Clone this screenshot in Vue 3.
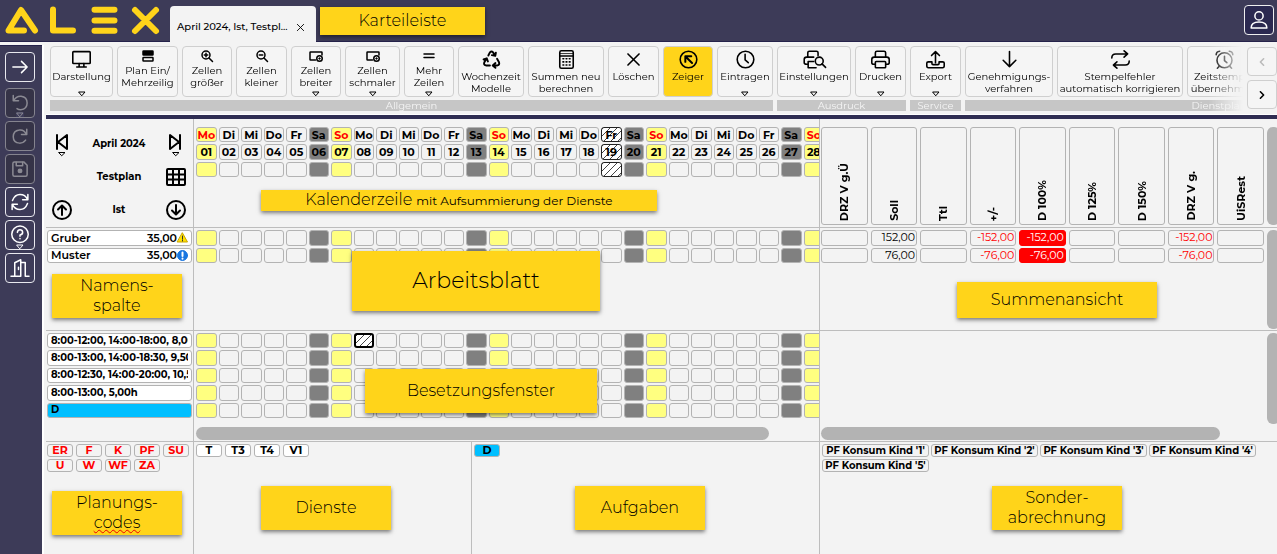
<script setup>
const groups = [
  {
    title: 'Allgemein',
    cls: '',
    items: [
      { icon: 'monitor', lines: ['Darstellung'], w: 63, menu: true },
      { icon: 'rows', lines: ['Plan Ein/', 'Mehrzeilig'], w: 61, small: true },
      { icon: 'zoomin', lines: ['Zellen', 'größer'], w: 50, small: true },
      { icon: 'zoomout', lines: ['Zellen', 'kleiner'], w: 51, small: true },
      { icon: 'cell', lines: ['Zellen', 'breiter'], w: 50, small: true, menu: true },
      { icon: 'cell', lines: ['Zellen', 'schmaler'], w: 55, small: true, menu: true },
      { icon: 'lines', lines: ['Mehr', 'Zeilen'], w: 50, small: true, menu: true },
      { icon: 'recycle', lines: ['Wochenzeit', 'Modelle'], w: 66 },
      { icon: 'calc', lines: ['Summen neu', 'berechnen'], w: 76 },
      { icon: 'cross', lines: ['Löschen'], w: 51 },
      { icon: 'pointer', lines: ['Zeiger'], w: 50, active: true },
      { icon: 'clock', lines: ['Eintragen'], w: 56, menu: true },
    ],
  },
  {
    title: 'Ausdruck',
    cls: '',
    items: [
      { icon: 'printsearch', lines: ['Einstellungen'], w: 74, menu: true },
      { icon: 'print', lines: ['Drucken'], w: 51, menu: true },
    ],
  },
  { title: 'Service', cls: '', items: [{ icon: 'export', lines: ['Export'], w: 51, menu: true }] },
  {
    title: 'Dienstplan',
    cls: 'wide',
    items: [
      { icon: 'down', lines: ['Genehmigungs-', 'verfahren'], w: 88 },
      { icon: 'repeat', lines: ['Stempelfehler', 'automatisch korrigieren'], w: 126 },
      { icon: 'alarm', lines: ['Zeitstempel', 'übernehmen'], w: 74 },
    ],
  },
]

const icons = {
  monitor: '<rect x="1" y="2" width="22" height="15" rx="1"/><path d="M9 17v4M15 17v4M6 21.500h12"/>',
  rows: '<rect x="2" y="2" width="20" height="8" rx="1" fill="currentColor"/><rect x="2" y="15" width="20" height="7" rx="1"/>',
  zoomin: '<circle cx="10" cy="10" r="8"/><path d="M16 16L23 23M10 6.500v7M6.500 10h7"/>',
  zoomout: '<circle cx="10" cy="10" r="8"/><path d="M16 16L23 23M6.500 10h7"/>',
  cell: '<path d="M11 20H1a1 1 0 0 1-1-1V5a1 1 0 0 1 1-1h22a1 1 0 0 1 1 1v5"/><circle cx="19" cy="17" r="5.500"/><path d="M19 16v2M18 17h2"/>',
  lines: '<path d="M2 8h20M2 15h20"/>',
  recycle: '<path d="M8 7l2-4q2-2 4 0l2.500 4M17.500 3.500L16.800 7.500 12.500 6.500M19 11l2.500 4.500q1 3-2 4H14M17 16.500L13.500 19.500 17 22.500M10 19.500H5q-3.500-1-2-4l2.500-4.500M2 12l4-1.500 1.500 4" stroke-width="2.400"/>',
  calc: '<rect x="3.500" y="1" width="17" height="22" rx="2"/><path d="M4 7.500h16"/><path d="M4 4.500h16" stroke-width="1"/><path d="M7.500 11h1M11.500 11h1M15.500 11h1M7.500 15h1M11.500 15h1M15.500 15h1M7.500 19h1M11.500 19h1M15.500 19h1"/>',
  cross: '<path d="M5 5l14 14M19 5L5 19"/>',
  pointer: '<circle cx="12" cy="12" r="10.500"/><path d="M8 15V8H15.500M8.500 8.500l8 8" stroke-width="2.500"/>',
  clock: '<circle cx="12" cy="12" r="10.500"/><path d="M11.500 5.500v7l4 3.500"/>',
  print: '<path d="M5.500 9V3.500q0-2 2-2h9q2 0 2 2V9M5 18H3.500Q1 18 1 16v-4q0-3 3-3h16q3 0 3 3v4q0 2-2.500 2H19"/><rect x="5.500" y="14.500" width="13" height="8" rx="1"/>',
  printsearch: '<path d="M3.500 9V3.500q0-2 2-2h9q2 0 2 2V7M4 18H2.500Q-1 18-1 16v-4q0-3 3-3h9M11 14.500H4v8h10"/><circle cx="18" cy="14" r="5"/><path d="M21.500 17.500L26 22"/>',
  export: '<path d="M12 16V2M7 7l5-5 5 5M7.500 15H3q-2 0-2 1.500V20q0 2.500 2 2.500h18q2 0 2-2.500v-3.500Q23 15 21 15h-4.500v2q0 1.500-1.500 1.500H9q-1.500 0-1.500-1.500z"/>',
  down: '<path d="M12 2v19M4 13l8 8 8-8"/>',
  repeat: '<path d="M1 10q0-5 5-5h15M16.500 1l4.500 4-4.500 4M23 14q0 5-5 5H3M7.500 15L3 19l4.500 4"/>',
  alarm: '<circle cx="12" cy="13" r="9.500"/><path d="M12 8v5.500l3 2.500M5 21L3 23M19 21l2 2M1.500 6q0-4 4.500-4.500M18 1.500q4.500.5 4.500 4.500"/>',
  right: '<path d="M2.500 12h19M14 4.500l7.500 7.500-7.500 7.500"/>',
  undo: '<path d="M3 2v7h7M3.500 9q3.500-6.500 10-6 8 1 8 9t-8.500 9q-3 0-5-1.500"/>',
  redo: '<path d="M21 3v7h-7M20.500 10Q17.500 3 11 4q-8 1-8 9t8.500 8.500q5 0 8-4"/>',
  save: '<path d="M2.500 4.500q0-2 2-2H17l4.500 4.500v12.500q0 2-2 2h-15q-2 0-2-2z"/><path d="M7 3v4.500h8.500V3"/><circle cx="12" cy="14.500" r="2.300" fill="currentColor"/>',
  sync: '<path d="M22.500 2v7h-7M1.500 22v-7h7M2 10Q5 2 12 2q7 0 10 6.500M22 14q-3 8-10 8-7 0-10-6.500"/>',
  help: '<circle cx="12" cy="11" r="11"/><path d="M8.500 8.500Q9 5 12 5t3.500 3-3.500 4v1.500M12 16.500v.5"/>',
  door: '<path d="M0 23h5V5l8-4v22h-3M5 23h4M13 4.500h6V23h5M10 11v3"/>',
  user: '<circle cx="12" cy="6.500" r="5.500"/><path d="M1.500 22.500q0-8 10.500-8t10.500 8z"/>',
}

const tools = [
  { icon: 'right', label: 'Weiter' },
  { icon: 'undo', label: 'Rückgängig', off: true, menu: true },
  { icon: 'redo', label: 'Wiederholen', off: true },
  { icon: 'save', label: 'Speichern', off: true },
  { icon: 'sync', label: 'Aktualisieren' },
  { icon: 'help', label: 'Hilfe', menu: true },
  { icon: 'door', label: 'Beenden' },
]

const names = ['Mo', 'Di', 'Mi', 'Do', 'Fr', 'Sa', 'So']
const days = Array.from({ length: 28 }, (_, i) => {
  const name = names[i % 7]
  return {
    n: i + 1,
    name,
    num: String(i + 1).padStart(2, '0'),
    kind: name === 'Sa' ? 'sat' : name === 'So' || i === 0 ? 'sun' : '',
  }
})

const sumHeads = ['DRZ V g.Ü', 'Soll', 'Ttl', '+/-', 'D 100%', 'D 125%', 'D 150%', 'DRZ V g.', 'UiSRest']
const sumRows = [
  ['', '152,00', '', '-152,00', '-152,00', '', '', '-152,00', ''],
  ['', '76,00', '', '-76,00', '-76,00', '', '', '-76,00', ''],
]
const shifts = [
  '8:00-12:00, 14:00-18:00, 8,00h',
  '8:00-13:00, 14:00-18:30, 9,50h',
  '8:00-12:30, 14:00-20:00, 10,50h',
  '8:00-13:00, 5,00h',
  'D',
]
const codes = ['ER', 'F', 'K', 'PF', 'SU', 'U', 'W', 'WF', 'ZA']
const duties = ['T', 'T3', 'T4', 'V1']
</script>

<template>
  <div class="app">
    <header class="top">
      <svg class="logo" viewBox="0 0 160 42" role="img" aria-label="ALEX">
        <path d="M24 30.500H8.500L21 10 35 30.500M53 9.500v21h20M94.500 9.800h20M94.500 20.500h20M94.500 30.800h20M135 10l21 21M156 10l-21 21" />
      </svg>
      <div class="tab">
        <span>April 2024, Ist, Testpl...</span>
        <button class="tabclose" aria-label="Schließen">
          <svg viewBox="0 0 10 10"><path d="M1.500 1.500l7 7M8.500 1.500l-7 7" /></svg>
        </button>
      </div>
      <div class="note n-tabs">Karteileiste</div>
      <button class="user" aria-label="Benutzer">
        <svg class="ico" viewBox="0 0 24 24" v-html="icons.user"></svg>
      </button>
    </header>

    <div class="body">
      <nav class="side">
        <button v-for="t in tools" :key="t.icon" class="tool" :class="{ off: t.off }" :aria-label="t.label">
          <svg class="ico" viewBox="0 0 24 24" v-html="icons[t.icon]"></svg>
          <svg v-if="t.menu" class="tri badge" viewBox="0 0 8 5"><path d="M1 1h6L4 4.500z" /></svg>
        </button>
      </nav>

      <main class="main">
        <div class="ribbon">
          <div class="scroller">
            <section v-for="g in groups" :key="g.title" class="group" :class="g.cls">
              <div class="buttons">
                <button
                  v-for="(b, i) in g.items"
                  :key="i"
                  class="rb"
                  :class="{ small: b.small, active: b.active }"
                  :style="{ width: b.w + 'px' }"
                >
                  <span class="ibox"><svg class="ico" viewBox="0 0 24 24" v-html="icons[b.icon]"></svg></span>
                  <span v-for="l in b.lines" :key="l" class="line">{{ l }}</span>
                  <svg v-if="b.menu" class="tri" viewBox="0 0 8 5"><path d="M1 1h6L4 4.500z" /></svg>
                </button>
              </div>
              <div class="gtitle">{{ g.title }}</div>
            </section>
          </div>
          <div class="pager">
            <button class="pg dim" aria-label="Zurück"><svg viewBox="0 0 10 10"><path d="M7 1L3 5l4 4" /></svg></button>
            <button class="pg" aria-label="Vor"><svg viewBox="0 0 10 10"><path d="M3 1l4 4-4 4" /></svg></button>
          </div>
        </div>

        <div class="board">
          <section class="pane head picker">
            <div class="prow">
              <button class="plain" aria-label="Voriger Monat">
                <svg viewBox="0 0 20 26"><path d="M5 4v14M15 4v14L6 11z" /><path class="thin" d="M7 21.500h6l-3 3z" /></svg>
              </button>
              <b>April 2024</b>
              <button class="plain" aria-label="Nächster Monat">
                <svg viewBox="0 0 20 26"><path d="M14 4v14M4 4v14L13 11z" /><path class="thin" d="M7 21.500h6l-3 3z" /></svg>
              </button>
            </div>
            <div class="prow">
              <span></span>
              <b>Testplan</b>
              <button class="plain" aria-label="Tabelle">
                <svg viewBox="0 0 20 26"><rect x="1" y="5" width="18" height="16" rx="1" /><path d="M1 10.500h18M1 15.500h18M7 5v16M13 5v16" /></svg>
              </button>
            </div>
            <div class="prow">
              <button class="plain" aria-label="Nach oben">
                <svg viewBox="0 0 20 26"><circle cx="10" cy="13" r="9" /><path d="M10 18V9M6 12.500l4-4 4 4" /></svg>
              </button>
              <b>Ist</b>
              <button class="plain" aria-label="Nach unten">
                <svg viewBox="0 0 20 26"><circle cx="10" cy="13" r="9" /><path d="M10 8v9M6 13.500l4 4 4-4" /></svg>
              </button>
            </div>
          </section>

          <section class="pane head calpane">
            <table class="cal r3">
              <thead>
                <tr>
                  <th v-for="d in days" :key="d.n" :class="[d.kind, { hatch: d.n === 19, red: d.kind === 'sun' }]">{{ d.name }}</th>
                </tr>
                <tr>
                  <th v-for="d in days" :key="d.n" :class="[d.kind, { hatch: d.n === 19 }]">{{ d.num }}</th>
                </tr>
                <tr>
                  <td v-for="d in days" :key="d.n" :class="[d.kind, { hatch: d.n === 19 }]"></td>
                </tr>
              </thead>
            </table>
            <div class="note n-cal"><span>Kalenderzeile <small>mit Aufsummierung der Dienste</small></span></div>
          </section>

          <section class="pane head sumpane">
            <table class="sum">
              <thead>
                <tr><th v-for="h in sumHeads" :key="h"><span>{{ h }}</span></th></tr>
              </thead>
            </table>
            <div class="vbar"></div>
          </section>

          <section class="pane mid">
            <ul class="list r2">
              <li>
                <span>Gruber</span><span class="hrs">35,00</span>
                <svg class="mark" viewBox="0 0 11 11"><path d="M5.500 1L10.500 10H.5z" fill="#ffe000" stroke="#c9a400" /><path d="M5.500 4v3M5.500 8v1" stroke="#333" /></svg>
              </li>
              <li>
                <span>Muster</span><span class="hrs">35,00</span>
                <svg class="mark" viewBox="0 0 11 11"><circle cx="5.500" cy="5.500" r="5" fill="#1976e0" stroke="#1976e0" /><path d="M5.500 2.500v3.500M5.500 8.500v.2" stroke="#fff" stroke-width="2" /></svg>
              </li>
            </ul>
            <div class="note n-names">Namens-<br />spalte</div>
          </section>

          <section class="pane mid calpane">
            <table class="cal r2">
              <tbody>
                <tr v-for="r in 2" :key="r"><td v-for="d in days" :key="d.n" :class="d.kind"></td></tr>
              </tbody>
            </table>
            <div class="note n-sheet">Arbeitsblatt</div>
          </section>

          <section class="pane mid sumpane">
            <table class="sum r2">
              <tbody>
                <tr v-for="(r, i) in sumRows" :key="i">
                  <td v-for="(v, j) in r" :key="j" :class="{ red: v[0] === '-', full: j === 4 }">{{ v }}</td>
                </tr>
              </tbody>
            </table>
            <div class="vbar"></div>
            <div class="note n-sum">Summenansicht</div>
          </section>

          <section class="pane staff">
            <ul class="list r5">
              <li v-for="s in shifts" :key="s" :class="{ blue: s === 'D' }"><span class="clip">{{ s }}</span></li>
            </ul>
          </section>

          <section class="pane staff calpane">
            <table class="cal r5">
              <tbody>
                <tr v-for="r in 5" :key="r">
                  <td v-for="d in days" :key="d.n" :class="[d.kind, { hatch: r === 1 && d.n === 8, picked: r === 1 && d.n === 8 }]"></td>
                </tr>
              </tbody>
            </table>
            <div class="hbar"></div>
            <div class="note n-staff">Besetzungsfenster</div>
          </section>

          <section class="pane staff sumpane">
            <div class="spacer"></div>
            <div class="vbar"></div>
            <div class="hbar"></div>
          </section>

          <section class="pane foot">
            <div class="chips">
              <button v-for="c in codes" :key="c" class="chip red">{{ c }}</button>
            </div>
            <div class="note n-codes">Planungs-<br /><span class="wavy">codes</span></div>
          </section>

          <div class="split">
            <section class="pane foot">
              <div class="chips">
                <button v-for="c in duties" :key="c" class="chip white">{{ c }}</button>
              </div>
              <div class="note n-duty">Dienste</div>
            </section>
            <section class="pane foot">
              <div class="chips"><button class="chip blue">D</button></div>
              <div class="note n-task">Aufgaben</div>
            </section>
          </div>

          <section class="pane foot sumpane">
            <div class="chips">
              <button v-for="n in 5" :key="n" class="chip long">PF Konsum Kind '{{ n }}'</button>
            </div>
            <div class="note n-extra">Sonder-<br />abrechnung</div>
          </section>
        </div>
      </main>
    </div>
  </div>
</template>

<style>
body {
  background: #f3f3f3;
  overflow: hidden;
}
</style>

<style scoped>
.app {
  min-height: 100vh;
  display: flex;
  flex-direction: column;
  background: #f3f3f3;
  color: #000;
  font: 11px/12px Montserrat, Inter, "Open Sans", sans-serif;
}
.app *,
.app {
  box-sizing: border-box;
}
button {
  font: inherit;
  color: inherit;
  padding: 0;
  margin: 0;
  cursor: pointer;
}
svg {
  display: block;
  fill: none;
  stroke: currentColor;
  stroke-width: 2;
  stroke-linecap: round;
  stroke-linejoin: round;
  overflow: visible;
}
.top {
  height: 42px;
  display: flex;
  align-items: flex-end;
  background: #3d3b58;
  border-bottom: 1px solid #25224a;
}
.logo {
  width: 160px;
  height: 42px;
  color: #ffd41a;
  stroke-width: 6;
  flex: none;
  margin-bottom: -1px;
}
.tab {
  width: 146px;
  height: 36px;
  margin: 0 4px -1px 10px;
  padding: 6px 11px 0 7px;
  display: flex;
  align-items: center;
  justify-content: space-between;
  background: #f3f3f3;
  border-radius: 4px 4px 0 0;
  font-size: 10px;
  font-weight: 500;
  white-space: nowrap;
}
.tabclose {
  border: 0;
  background: none;
}
.tabclose svg {
  width: 9px;
  height: 9px;
  stroke-width: 1;
}
.user {
  width: 30px;
  height: 30px;
  margin: 0 3px 6px auto;
  display: grid;
  place-items: center;
  background: #2b2950;
  border: 1px solid #eee;
  border-radius: 4px;
  color: #fff;
}
.user .ico {
  width: 18px;
  height: 18px;
}
.body {
  flex: 1;
  display: flex;
  padding-top: 3px;
}
.side {
  width: 42px;
  flex: none;
  margin-right: 4px;
  padding: 6px 0 0 5px;
  display: flex;
  flex-direction: column;
  gap: 3px;
  background: #3d3b58;
  border-top: 1px solid #25224a;
  box-shadow: 2px 0 0 #fff;
}
.tool {
  width: 30px;
  height: 30px;
  display: grid;
  place-items: center;
  position: relative;
  background: #3d3b58;
  border: 1px solid #e8e8ee;
  border-radius: 4px;
  color: #fff;
}
.tool:first-child {
  margin-bottom: 3px;
}
.tool .ico {
  width: 18px;
  height: 18px;
}
.tool.off {
  background: #353347;
  border-color: #85848f;
  color: #8b8a93;
}
.badge {
  position: absolute;
  bottom: 0;
  left: 10px;
}
.tool .badge {
  background: #3d3b58;
}
.main {
  flex: 1;
  min-width: 0;
  display: flex;
  flex-direction: column;
}
.ribbon {
  height: 70px;
  display: flex;
  padding: 1px 0 0 4px;
  border-bottom: 1px solid #fff;
}
.scroller {
  flex: 1;
  min-width: 0;
  display: flex;
  gap: 4px;
  overflow: hidden;
  mask-image: linear-gradient(to right, #000 calc(100% - 34px), transparent);
}
.group {
  flex: none;
}
.group.wide {
  width: 508px;
}
.buttons {
  display: flex;
  gap: 4px;
}
.rb {
  flex: none;
  height: 51px;
  display: flex;
  flex-direction: column;
  align-items: center;
  justify-content: flex-start;
  background: #f5f5f5;
  border: 1px solid #cfcfcf;
  border-radius: 4px;
  white-space: nowrap;
  font-size: 10px;
}
.rb.active {
  background: #ffd41a;
}
.ibox {
  height: 24px;
  flex: none;
  display: grid;
  place-items: center;
}
.ibox .ico {
  width: 19px;
  height: 19px;
}
.small .ibox {
  height: 18px;
}
.small .ibox .ico {
  width: 12px;
  height: 12px;
}
.small .ico {
  stroke-width: 3;
}
.tri {
  width: 8px;
  height: 5px;
  stroke-width: 1;
}
.rb .tri {
  margin-top: auto;
}
.gtitle {
  height: 11px;
  margin-top: 3px;
  background: #c6c6c6;
  color: #f5f5f5;
  font-size: 10px;
  line-height: 12px;
  text-align: center;
}
.pager {
  display: flex;
  flex-direction: column;
  gap: 4px;
  padding: 1px 0 0 4px;
}
.pg {
  width: 30px;
  height: 29px;
  display: grid;
  place-items: center;
  background: #f5f5f5;
  border: 1px solid #cfcfcf;
  border-radius: 4px;
}
.pg svg {
  width: 8px;
  height: 8px;
}
.pg.dim {
  color: #bbb;
}
.board {
  flex: 1;
  display: grid;
  grid-template-columns: 148px minmax(0, 626fr) minmax(0, 457fr);
  grid-template-rows: minmax(109px, auto) minmax(103px, auto) minmax(111px, auto) minmax(112px, 1fr);
  border-top: 4px solid #2f2d52;
}
.pane {
  position: relative;
  min-width: 0;
  overflow: hidden;
  border-right: 1px solid #bdbdbd;
  border-bottom: 1px solid #bdbdbd;
}
.sumpane {
  border-right: 0;
}
.foot {
  border-bottom: 0;
}
.head {
  padding-top: 8px;
}
.mid,
.staff {
  padding-top: 2px;
}
.picker {
  padding: 8px 7px 0 6px;
}
.prow {
  height: 33px;
  display: grid;
  grid-template-columns: 20px 1fr 20px;
  align-items: center;
  text-align: center;
  font-size: 10px;
}
.plain {
  border: 0;
  background: none;
}
.plain svg {
  width: 20px;
  height: 26px;
}
.plain .thin {
  stroke-width: 1;
}
.calpane {
  padding-left: 2px;
}
.cal,
.sum,
.sum thead {
  display: block;
}
.cal {
  margin-right: -5px;
}
.cal thead,
.cal tbody,
.sum.r2 tbody {
  display: grid;
  grid-auto-rows: 1fr;
  gap: 2px;
}
.r3 thead {
  height: 50px;
}
.r2 tbody,
.list.r2 {
  height: 33px;
}
.r5 tbody,
.list.r5 {
  height: 85px;
}
.list.r5 {
  font-size: 10px;
  font-weight: 700;
}
.cal tr {
  display: grid;
  grid-template-columns: repeat(28, minmax(0, 1fr));
  gap: 2px;
}
.cal th,
.cal td {
  padding: 0;
  border: 1px solid #b3b3b3;
  border-radius: 3px;
  display: flex;
  align-items: center;
  justify-content: center;
  min-height: 0;
  line-height: 12px;
}
.cal .sun {
  background: #ffff80;
}
.cal .sat {
  background: #808080;
}
.cal .hatch {
  background: repeating-linear-gradient(135deg, #444 0 1px, #fff 1px 5px);
  border-color: #222;
}
.cal .picked {
  border: 2px solid #000;
}
.red {
  color: #f00;
}
.sumpane {
  padding-left: 1px;
  display: grid;
  grid-template-columns: minmax(0, 1fr) 10px;
  column-gap: 3px;
  align-content: start;
}
.sumpane .vbar {
  margin-right: -3px;
}
.sum tr {
  display: grid;
  grid-template-columns: repeat(9, minmax(0, 1fr));
  gap: 3px;
}
.sum th {
  height: 98px;
  padding: 0 0 3px;
  border: 1px solid #b3b3b3;
  border-radius: 3px;
  display: flex;
  align-items: flex-end;
  justify-content: center;
}
.sum th span {
  writing-mode: vertical-rl;
  rotate: 180deg;
  white-space: nowrap;
}
.sum td {
  padding: 0 1px;
  border: 1px solid #b3b3b3;
  border-radius: 3px;
  text-align: right;
  line-height: 13px;
}
.sum .full {
  background: #f00;
  border-color: #f00;
  color: #fff;
}
.vbar {
  background: #b3b3b3;
  border-radius: 6px;
}
.mid .vbar {
  height: 99px;
}
.staff .vbar {
  height: 91px;
}
.hbar {
  height: 13px;
  border-radius: 7px;
  background: #b3b3b3;
}
.calpane .hbar {
  width: 92%;
  margin-top: 9px;
}
.sumpane .hbar {
  width: 90%;
  grid-column: 1 / 2;
  margin-top: 3px;
}
.list {
  margin: 0 1px;
  padding: 0;
  list-style: none;
  display: grid;
  grid-auto-rows: 1fr;
  gap: 2px;
  font-weight: 600;
}
.list li {
  display: flex;
  align-items: center;
  min-width: 0;
  padding: 0 3px;
  background: #fff;
  border: 1px solid #b3b3b3;
  border-radius: 3px;
  white-space: nowrap;
}
.clip {
  overflow: hidden;
}
.hrs {
  margin-left: auto;
}
.mark {
  width: 11px;
  height: 11px;
  stroke-width: 1;
}
.list .blue,
.chip.blue {
  background: #00bfff;
}
.chips {
  display: flex;
  flex-wrap: wrap;
  gap: 2px 3px;
  padding: 2px 0 0 1px;
}
.split {
  display: grid;
  grid-template-columns: minmax(0, 278fr) minmax(0, 348fr);
}
.split .chips {
  padding-left: 2px;
}
.chip {
  width: 26px;
  height: 13px;
  background: #f3f3f3;
  border: 1px solid #b3b3b3;
  border-radius: 3px;
  font-weight: 700;
  line-height: 11px;
}
.chip.white {
  background: #fff;
}
.chip.long {
  width: 107px;
  white-space: nowrap;
  font-size: 10px;
}
.foot.sumpane {
  display: block;
}
.foot.sumpane .chips {
  column-gap: 2px;
}
.note {
  position: absolute;
  display: flex;
  align-items: center;
  justify-content: center;
  background: #ffd41a;
  box-shadow: 0 2px 4px rgba(0, 0, 0, 0.5);
  font-size: 16px;
  font-weight: 300;
  line-height: 20px;
  text-align: center;
}
.note small {
  font-size: 12px;
  font-weight: 400;
}
.n-tabs {
  position: static;
  align-self: center;
  width: 165px;
  height: 28px;
}
.n-cal {
  left: 67px;
  top: 71px;
  width: 396px;
  height: 21px;
}
.n-names,
.n-codes,
.n-duty,
.n-task,
.n-extra {
  width: 130px;
  height: 44px;
}
.n-names {
  left: 6px;
  top: 46px;
}
.n-sheet {
  left: 158px;
  top: 23px;
  width: 248px;
  height: 60px;
  font-size: 22px;
}
.n-sum {
  left: 137px;
  top: 54px;
  width: 200px;
  height: 36px;
}
.n-staff {
  left: 171px;
  top: 38px;
  width: 232px;
  height: 44px;
}
.n-codes {
  left: 6px;
  top: 49px;
  display: block;
  padding-top: 2px;
}
.n-names {
  display: block;
  padding-top: 2px;
}
.n-duty {
  left: 67px;
  top: 44px;
}
.n-task {
  left: 103px;
  top: 44px;
}
.n-extra {
  left: 172px;
  top: 44px;
  display: block;
  padding-top: 2px;
}
.wavy {
  text-decoration: underline wavy #e00 1px;
}
</style>
